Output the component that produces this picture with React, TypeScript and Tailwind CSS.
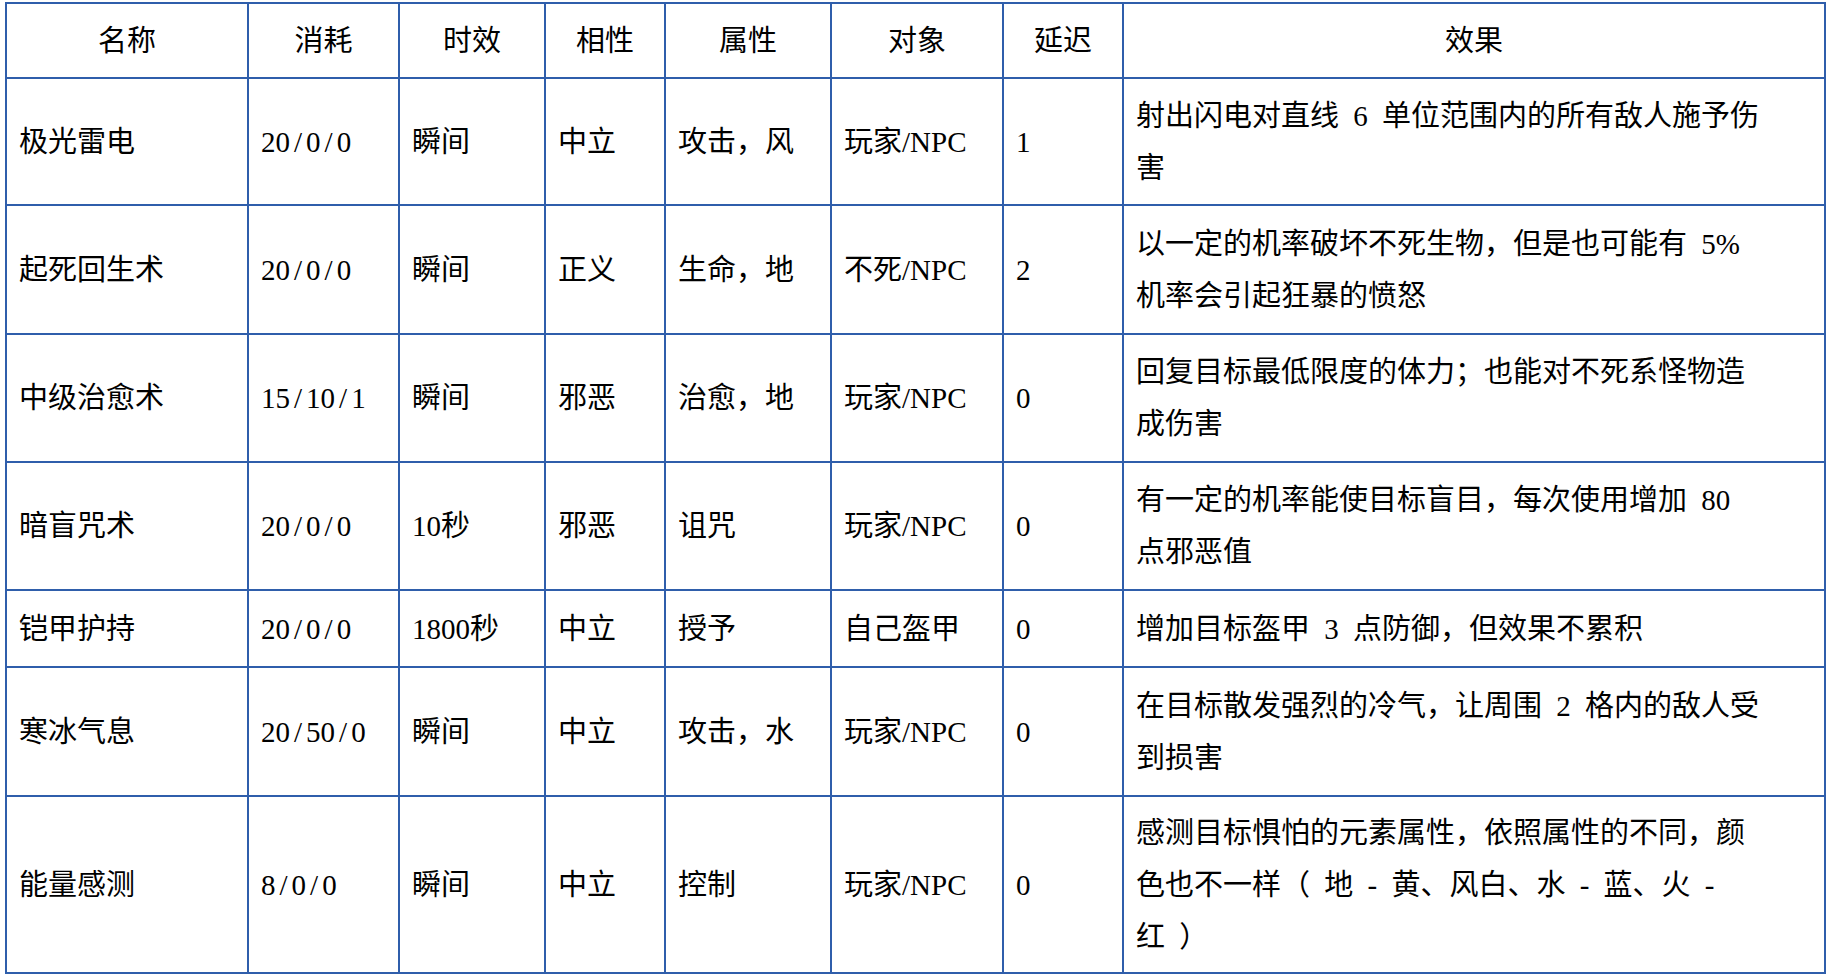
const headers = ["名称", "消耗", "时效", "相性", "属性", "对象", "延迟", "效果"];

const colWidths = ["w-[242px]", "w-[151px]", "w-[146px]", "w-[120px]", "w-[166px]", "w-[172px]", "w-[120px]", "w-[702px]"];

type Spell = {
  name: string;
  cost: string;
  time: string;
  align: string;
  attr: string;
  target: string;
  delay: string;
  effect: string[];
  h: string;
};

const spells: Spell[] = [
  { name: "极光雷电", cost: "20/0/0", time: "瞬间", align: "中立", attr: "攻击，风", target: "玩家/NPC", delay: "1", effect: ["射出闪电对直线 6 单位范围内的所有敌人施予伤", "害"], h: "h-[127px]" },
  { name: "起死回生术", cost: "20/0/0", time: "瞬间", align: "正义", attr: "生命，地", target: "不死/NPC", delay: "2", effect: ["以一定的机率破坏不死生物，但是也可能有 5%", "机率会引起狂暴的愤怒"], h: "h-[129px]" },
  { name: "中级治愈术", cost: "15/10/1", time: "瞬间", align: "邪恶", attr: "治愈，地", target: "玩家/NPC", delay: "0", effect: ["回复目标最低限度的体力；也能对不死系怪物造", "成伤害"], h: "h-[128px]" },
  { name: "暗盲咒术", cost: "20/0/0", time: "10秒", align: "邪恶", attr: "诅咒", target: "玩家/NPC", delay: "0", effect: ["有一定的机率能使目标盲目，每次使用增加 80", "点邪恶值"], h: "h-[128px]" },
  { name: "铠甲护持", cost: "20/0/0", time: "1800秒", align: "中立", attr: "授予", target: "自己盔甲", delay: "0", effect: ["增加目标盔甲 3 点防御，但效果不累积"], h: "h-[77px]" },
  { name: "寒冰气息", cost: "20/50/0", time: "瞬间", align: "中立", attr: "攻击，水", target: "玩家/NPC", delay: "0", effect: ["在目标散发强烈的冷气，让周围 2 格内的敌人受", "到损害"], h: "h-[129px]" },
  { name: "能量感测", cost: "8/0/0", time: "瞬间", align: "中立", attr: "控制", target: "玩家/NPC", delay: "0", effect: ["感测目标惧怕的元素属性，依照属性的不同，颜", "色也不一样（ 地 - 黄、风白、水 - 蓝、火 -", "红 ）"], h: "h-[177px]" },
];

const cell = "border-2 border-[#2f5eab] px-[12px] align-middle whitespace-nowrap";

// slashes in the cost column are half-width in the original font
function Cost({ value }: { value: string }) {
  const parts = value.split("/");
  return <>
      {parts.map((p, i) => <span key={i}>
          {i > 0 && <span className="mx-[4px]">/</span>}
          {p}
        </span>)}
    </>;
}

export default function App() {
  return (
    <div className="min-h-screen bg-white pl-[5px] pt-[2px] text-black font-['Liberation_Serif','Noto_Sans_CJK_SC',serif] text-[29px] leading-[52px] [word-spacing:7px]">
      <table className="table-fixed border-collapse w-[1819px]">
        <colgroup>
          {colWidths.map((w, i) => <col key={i} className={w} />)}
        </colgroup>
        <thead>
          <tr className="h-[75px]">
            {headers.map(h => <th key={h} className={`${cell} text-center font-normal`}>
                {h}
              </th>)}
          </tr>
        </thead>
        <tbody>
          {spells.map(s => <tr key={s.name} className={s.h}>
              <td className={cell}>{s.name}</td>
              <td className={cell}><Cost value={s.cost} /></td>
              <td className={cell}>{s.time}</td>
              <td className={cell}>{s.align}</td>
              <td className={cell}>{s.attr}</td>
              <td className={cell}>{s.target}</td>
              <td className={cell}>{s.delay}</td>
              <td className={cell}>
                {s.effect.map((line, i) => <div key={i}>{line}</div>)}
              </td>
            </tr>)}
        </tbody>
      </table>
    </div>
  );
}
